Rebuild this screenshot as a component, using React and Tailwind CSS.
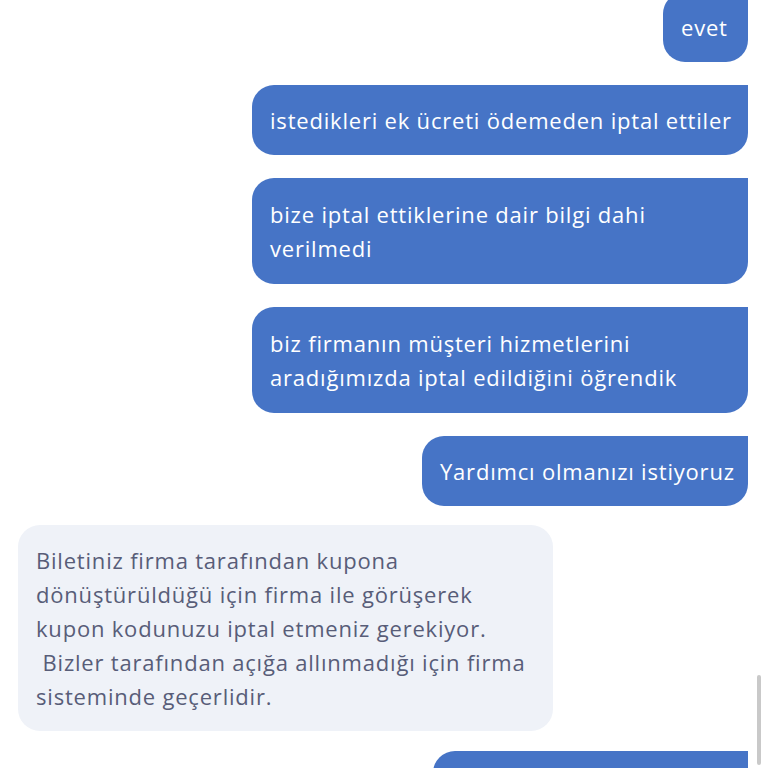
import React from 'react';

const userMessages = [
  { w: 'w-[85px]', lines: ['evet'] },
  { w: 'w-[496px]', lines: ['istedikleri ek ücreti ödemeden iptal ettiler'] },
  { w: 'w-[496px]', lines: ['bize iptal ettiklerine dair bilgi dahi', 'verilmedi'] },
  { w: 'w-[496px]', lines: ['biz firmanın müşteri hizmetlerini', 'aradığımızda iptal edildiğini öğrendik'] },
  { w: 'w-[326px]', lines: ['Yardımcı olmanızı istiyoruz'] },
];

const agentLines = [
  'Biletiniz firma tarafından kupona',
  'dönüştürüldüğü için firma ile görüşerek',
  'kupon kodunuzu iptal etmeniz gerekiyor.',
  '\u00a0Bizler tarafından açığa allınmadığı için firma',
  'sisteminde geçerlidir.',
];

const UserBubble = ({ w, lines }) => (
  <div className="flex justify-end">
    <div className={`${w} bg-[#4674c6] text-white rounded-[22px] rounded-tr-none px-[18px] ${lines.length > 1 ? 'py-[19px]' : 'py-[18px]'}`}>
      {lines.map((l, i) => (
        <div key={i} className="h-[34px] text-[22px] leading-[34px] tracking-[0.8px] whitespace-nowrap">{l}</div>
      ))}
    </div>
  </div>
);

export default function App() {
  return (
    <div
      className="relative w-[768px] h-[768px] overflow-hidden bg-white"
      style={{ fontFamily: '"Open Sans", "Noto Sans", sans-serif', fontVariantLigatures: 'none' }}
    >
      <div className="flex flex-col gap-[23px] pl-[18px] pr-[20px] -mt-[8px]">
        {userMessages.map((m, i) => (
          <UserBubble key={i} w={m.w} lines={m.lines} />
        ))}
        <div className="flex justify-start -mt-[4px]">
          <div className="bg-[#eff2f8] text-[#585d78] rounded-[22px] px-[18px] py-[18px] w-[535px]">
            {agentLines.map((l, i) => (
              <div key={i} className="h-[34px] text-[22px] leading-[34px] tracking-[0.8px] whitespace-nowrap">{l}</div>
            ))}
          </div>
        </div>
        <div className="flex justify-end -mt-[3px]">
          <div className="bg-[#4674c6] rounded-[22px] rounded-tr-none w-[315px] h-[70px]" />
        </div>
      </div>
      <div className="absolute right-[7px] top-[675px] w-[4px] h-[90px] rounded-full bg-[#c9c9c9]" />
    </div>
  );
}
